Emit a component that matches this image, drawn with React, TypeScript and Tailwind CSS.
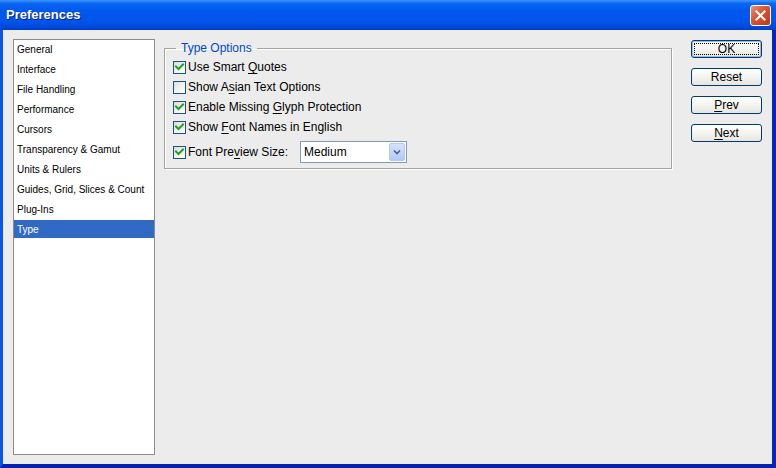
const categories = [
  "General",
  "Interface",
  "File Handling",
  "Performance",
  "Cursors",
  "Transparency & Gamut",
  "Units & Rulers",
  "Guides, Grid, Slices & Count",
  "Plug-Ins",
  "Type",
];

function CheckBox({ checked }: { checked: boolean }) {
  return (
    <span className="w-[13px] h-[13px] shrink-0 border border-[#1c5180] bg-[linear-gradient(135deg,#dcdcd7_0%,#f4f4f0_60%,#ffffff_100%)] flex items-center justify-center">
      {checked && (
        <svg width="11" height="11" viewBox="0 0 11 11">
          <path d="M2 4.5 L4.5 7 L9 2.5" fill="none" stroke="#21a121" strokeWidth="2" strokeLinecap="square" />
        </svg>
      )}
    </span>
  );
}

function Option({ checked, pre, key1, post }: { checked: boolean; pre: string; key1: string; post: string }) {
  return (
    <label className="h-[20px] flex items-center">
      <CheckBox checked={checked} />
      <span className="ml-[2px]">
        {pre}
        <span className="underline underline-offset-2">{key1}</span>
        {post}
      </span>
    </label>
  );
}

function Button({ children, primary }: { children: React.ReactNode; primary?: boolean }) {
  return (
    <button
      className={
        "w-[71px] h-[18px] rounded-[3px] border border-[#003c74] bg-[linear-gradient(to_bottom,#ffffff_0%,#f4f4f0_50%,#e6e5de_100%)] text-[12px] leading-none text-black flex items-center justify-center " +
        (primary
          ? "shadow-[inset_0_0_0_1px_#9db9eb] outline-1 outline-dotted outline-black outline-offset-[-4px]"
          : "")
      }
    >
      {children}
    </button>
  );
}

export default function App() {
  return (
    <div className="w-[776px] h-[468px] flex flex-col font-['Liberation_Sans',Arial,sans-serif] text-black select-none">
      <div className="h-[30px] shrink-0 flex items-center justify-between pl-[6px] pr-[5px] bg-[linear-gradient(to_bottom,#3d95ff_0%,#0a66f2_12%,#0058ee_35%,#0055eb_70%,#0049dc_90%,#003ec9_100%)]">
        <span className="text-white font-bold text-[13px] [text-shadow:1px_1px_0_#0a1e8a]">Preferences</span>
        <div className="w-[21px] h-[21px] rounded-[3px] border border-white bg-[linear-gradient(135deg,#e8947a_0%,#d8532f_45%,#c2390f_100%)] flex items-center justify-center">
          <svg width="11" height="11" viewBox="0 0 11 11">
            <path d="M1.5 1.5 L9.5 9.5 M9.5 1.5 L1.5 9.5" stroke="#ffffff" strokeWidth="2.2" strokeLinecap="square" />
          </svg>
        </div>
      </div>

      <div className="flex-1 flex items-start bg-[#ececec] border-l-[3px] border-r-[4px] border-b-[4px] border-l-[#0a55ee] border-r-[#0626b8] border-b-[#0620b0] pl-[10px] pr-[10px] pt-[9px]">
        <ul className="w-[142px] h-[416px] shrink-0 border border-[#8c8c8c] bg-white text-[10px]">
          {categories.map((c) => (
            <li
              key={c}
              className={
                "h-[18px] mb-[2px] pl-[3px] flex items-center " +
                (c === "Type" ? "bg-[#316ac5] text-white" : "")
              }
            >
              {c}
            </li>
          ))}
        </ul>

        <fieldset className="ml-[9px] mt-[2px] w-[508px] border border-[#a5a59f] shadow-[1px_1px_0_#ffffff,inset_1px_1px_0_#ffffff] px-[8px] pb-[5px] text-[12px]">
          <legend className="ml-[3px] px-[5px] text-[#0046d5] leading-[14px]">Type Options</legend>
          <div className="pt-[2px] flex flex-col">
            <Option checked pre="Use Smart " key1="Q" post="uotes" />
            <Option checked={false} pre="Show A" key1="s" post="ian Text Options" />
            <Option checked pre="Enable Missing " key1="G" post="lyph Protection" />
            <Option checked pre="Show " key1="F" post="ont Names in English" />
            <div className="h-[22px] mt-[4px] flex items-center">
              <CheckBox checked />
              <span className="ml-[2px] w-[112px]">
                Font Pre<span className="underline underline-offset-2">v</span>iew Size:
              </span>
              <div className="w-[107px] h-[22px] border border-[#7f9db9] bg-white flex items-center pl-[3px]">
                <span>Medium</span>
                <div className="ml-auto mr-[1px] w-[16px] h-[18px] rounded-[2px] border border-[#b3c8f5] bg-[linear-gradient(to_bottom,#d6e2fd_0%,#c1d3fb_60%,#b2c8f8_100%)] flex items-center justify-center">
                  <svg width="8" height="6" viewBox="0 0 8 6">
                    <path d="M1 1.5 L4 4.5 L7 1.5" fill="none" stroke="#4d6185" strokeWidth="1.6" />
                  </svg>
                </div>
              </div>
            </div>
          </div>
        </fieldset>

        <div className="ml-[19px] mt-[1px] flex flex-col gap-[10px]">
          <Button primary>OK</Button>
          <Button>Reset</Button>
          <Button>
            <span className="underline underline-offset-2">P</span>rev
          </Button>
          <Button>
            <span className="underline underline-offset-2">N</span>ext
          </Button>
        </div>
      </div>
    </div>
  );
}
